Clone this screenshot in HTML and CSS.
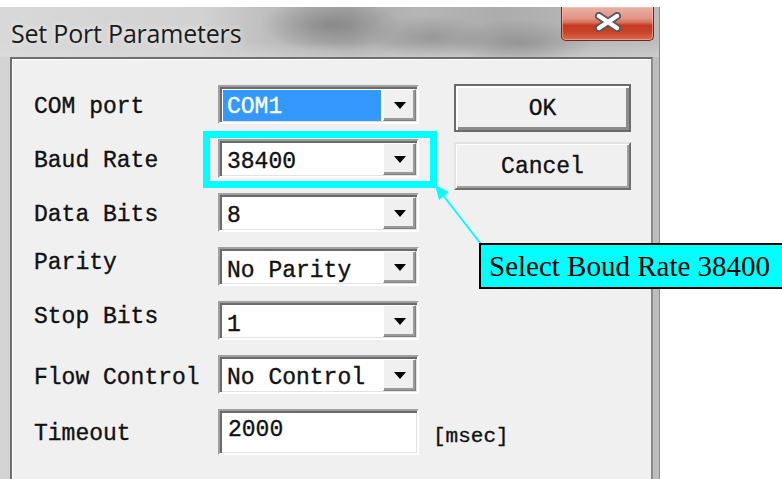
FILE: index.html
```html
<!DOCTYPE html>
<html>
<head>
<meta charset="utf-8">
<title>Set Port Parameters</title>
<link rel="stylesheet" href="styles.css">
</head>
<body>
<div class="window">
  <div class="titlebar">
    <span class="title">Set Port Parameters</span>
    <button class="close" aria-label="Close">
      <svg width="28" height="20" viewBox="0 0 28 20">
        <path d="M5 4 L23 16 M23 4 L5 16" stroke="#585858" stroke-width="8" stroke-linecap="round"/>
        <path d="M5 4 L23 16 M23 4 L5 16" stroke="#ffffff" stroke-width="4.5" stroke-linecap="round"/>
      </svg>
    </button>
  </div>
  <div class="frame">
    <div class="client">
      <span class="label">COM port</span>
      <div class="combo"><span class="value selected">COM1</span><span class="drop"><i></i></span></div>

      <span class="label">Baud Rate</span>
      <div class="combo"><span class="value">38400</span><span class="drop"><i></i></span></div>

      <span class="label">Data Bits</span>
      <div class="combo"><span class="value">8</span><span class="drop"><i></i></span></div>

      <span class="label up">Parity</span>
      <div class="combo"><span class="value low">No Parity</span><span class="drop"><i></i></span></div>

      <span class="label up">Stop Bits</span>
      <div class="combo"><span class="value low">1</span><span class="drop"><i></i></span></div>

      <span class="label down">Flow Control</span>
      <div class="combo"><span class="value">No Control</span><span class="drop"><i></i></span></div>

      <span class="label">Timeout</span>
      <div class="edit">2000</div>
      <span class="unit">[msec]</span>

      <div class="buttons">
        <button class="btn default">OK</button>
        <button class="btn">Cancel</button>
      </div>
    </div>
  </div>
</div>

<div class="highlight"></div>
<svg class="pointer" width="782" height="479" viewBox="0 0 782 479">
  <line x1="481" y1="244" x2="442" y2="194" stroke="#00ffff" stroke-width="2"/>
  <polygon points="435,185 449,192 439,200" fill="#00ffff"/>
</svg>
<div class="callout">Select Boud Rate 38400</div>
</body>
</html>
```

FILE: styles.css
```css
html, body {
  margin: 0;
  padding: 0;
}

body {
  width: 782px;
  height: 479px;
  overflow: hidden;
  background: #ffffff;
  position: relative;
  font-family: "Liberation Mono", "Courier New", monospace;
}

/* Dialog window with glass frame */
.window {
  margin-top: 7px;
  width: 660px;
  height: 480px;
  display: flex;
  flex-direction: column;
  background: linear-gradient(90deg, #d4d4d4 0, #d0d0d0 300px, #c4c4c4 600px, #bdbdbd 660px);
  box-sizing: border-box;
  border-right: 1px solid #8c8c8c;
}

.titlebar {
  height: 50px;
  flex: none;
  display: flex;
  align-items: center;
  padding-left: 11px;
  background:
    radial-gradient(ellipse 70px 26px at 330px 18px, rgba(100, 100, 100, 0.5), transparent),
    radial-gradient(ellipse 60px 22px at 430px 30px, rgba(110, 110, 110, 0.4), transparent),
    radial-gradient(ellipse 70px 24px at 520px 36px, rgba(110, 110, 110, 0.4), transparent),
    linear-gradient(180deg, rgba(255, 255, 255, 0) 70%, rgba(220, 220, 220, 0.5) 100%),
    linear-gradient(90deg, #d8d8d8 0, #d2d2d2 200px, #b8b8b8 290px, #a9a9a9 350px, #b6b6b6 420px, #acacac 500px, #b8b8b8 600px, #bcbcbc 660px);
}

.title {
  font-family: "Open Sans", "Noto Sans", sans-serif;
  font-size: 25px;
  color: #1c1c1c;
  letter-spacing: -0.2px;
  text-shadow: 0 0 6px rgba(255, 255, 255, 0.8);
  margin-top: 2px;
}

.close {
  margin-left: auto;
  margin-right: 5px;
  align-self: flex-start;
  width: 93px;
  height: 34px;
  padding: 0;
  border: 1px solid #6a2a1e;
  border-top: none;
  border-radius: 0 0 5px 5px;
  background: linear-gradient(180deg, #eab0a4 0%, #e09484 35%, #d56a55 48%, #c63a22 55%, #c84328 75%, #dc6a4e 100%);
  box-shadow: inset 0 0 0 1px rgba(255, 200, 190, 0.5);
  display: flex;
  align-items: center;
  justify-content: center;
}

.close svg {
  margin-top: -4px;
}

.frame {
  flex: 1;
  display: flex;
  padding: 0 6px 0 10px;
}

/* Client area of the dialog */
.client {
  flex: 1;
  background: #f0f0f0;
  border: 2px solid;
  border-color: #6e6e6e #8a8a8a #8a8a8a #6e6e6e;
  box-shadow: inset 1px 1px 0 #ffffff;
  display: grid;
  grid-template-columns: 184px 201px 35px 177px;
  grid-template-rows: repeat(6, 39px) 46px;
  row-gap: 15px;
  align-content: start;
  padding: 26px 0 0 22px;
  -webkit-text-stroke: 0.35px currentColor;
}

.label {
  grid-column: 1;
  align-self: center;
  font-size: 23px;
  line-height: 23px;
  color: #111;
  white-space: nowrap;
  margin-top: 5px;
}

.label.up {
  margin-top: 0;
  margin-bottom: 6px;
}

.label.down {
  margin-top: 8px;
}

/* Sunken drop-down combo */
.combo,
.edit {
  grid-column: 2;
  box-sizing: border-box;
  background: #ffffff;
  border: 2px solid;
  border-color: #a0a0a0 #ffffff #ffffff #a0a0a0;
  box-shadow: inset 2px 2px 0 #6a6a6a, inset -1px -1px 0 #e3e3e3;
}

.combo {
  display: flex;
  height: 39px;
  padding: 2px 1px 1px 2px;
}

.value {
  flex: 1;
  display: flex;
  align-items: center;
  padding-left: 5px;
  padding-top: 5px;
  font-size: 23px;
  color: #111;
  white-space: nowrap;
}

.value.low {
  padding-top: 7px;
}

.value.selected {
  background: #3399ff;
  color: #ffffff;
  margin: 1px 2px 0 1px;
  padding-left: 4px;
  padding-top: 2px;
}

.drop {
  width: 33px;
  flex: none;
  box-sizing: border-box;
  background: #f0f0f0;
  border: 1px solid;
  border-color: #ffffff #808080 #808080 #ffffff;
  box-shadow: inset -2px -2px 0 #9a9a9a;
  display: flex;
  align-items: center;
  justify-content: center;
}

.drop i {
  width: 0;
  height: 0;
  border-left: 6px solid transparent;
  border-right: 6px solid transparent;
  border-top: 7px solid #000;
  margin-top: 1px;
}

.edit {
  height: 46px;
  font-size: 23px;
  line-height: 23px;
  padding: 8px 8px 0 8px;
  color: #111;
}

.unit {
  grid-column: 3 / 5;
  grid-row: 7;
  align-self: center;
  padding-left: 14px;
  margin-top: 9px;
  font-size: 21px;
  color: #111;
}

/* Push buttons */
.buttons {
  grid-column: 4;
  grid-row: 1 / span 3;
  align-self: start;
  margin-top: -1px;
  display: flex;
  flex-direction: column;
  gap: 10px;
}

.btn {
  height: 48px;
  width: 177px;
  font-family: "Liberation Mono", "Courier New", monospace;
  font-size: 23px;
  color: #111;
  -webkit-text-stroke: 0.35px currentColor;
  background: #f0f0f0;
  border: 2px solid;
  border-color: #e3e3e3 #6e6e6e #6e6e6e #e3e3e3;
  box-shadow: inset 1px 1px 0 #ffffff, inset -2px -2px 0 #a0a0a0;
  padding: 2px 0 0 0;
}

.btn.default {
  border-color: #6b6b6b;
  box-shadow: inset 2px 2px 0 #ffffff, inset -3px -3px 0 #8c8c8c;
}

/* Annotation overlay */
.highlight {
  position: absolute;
  left: 203px;
  top: 131px;
  width: 234px;
  height: 57px;
  box-sizing: border-box;
  border: 7px solid #00ffff;
}

.pointer {
  position: absolute;
  left: 0;
  top: 0;
  pointer-events: none;
}

.callout {
  position: absolute;
  left: 479px;
  top: 243px;
  width: 330px;
  height: 46px;
  box-sizing: border-box;
  border: 2px solid #000;
  background: #00ffff;
  font-family: "Liberation Serif", "Times New Roman", serif;
  font-size: 29px;
  line-height: 42px;
  padding-left: 8px;
  color: #000;
  white-space: nowrap;
}
```
